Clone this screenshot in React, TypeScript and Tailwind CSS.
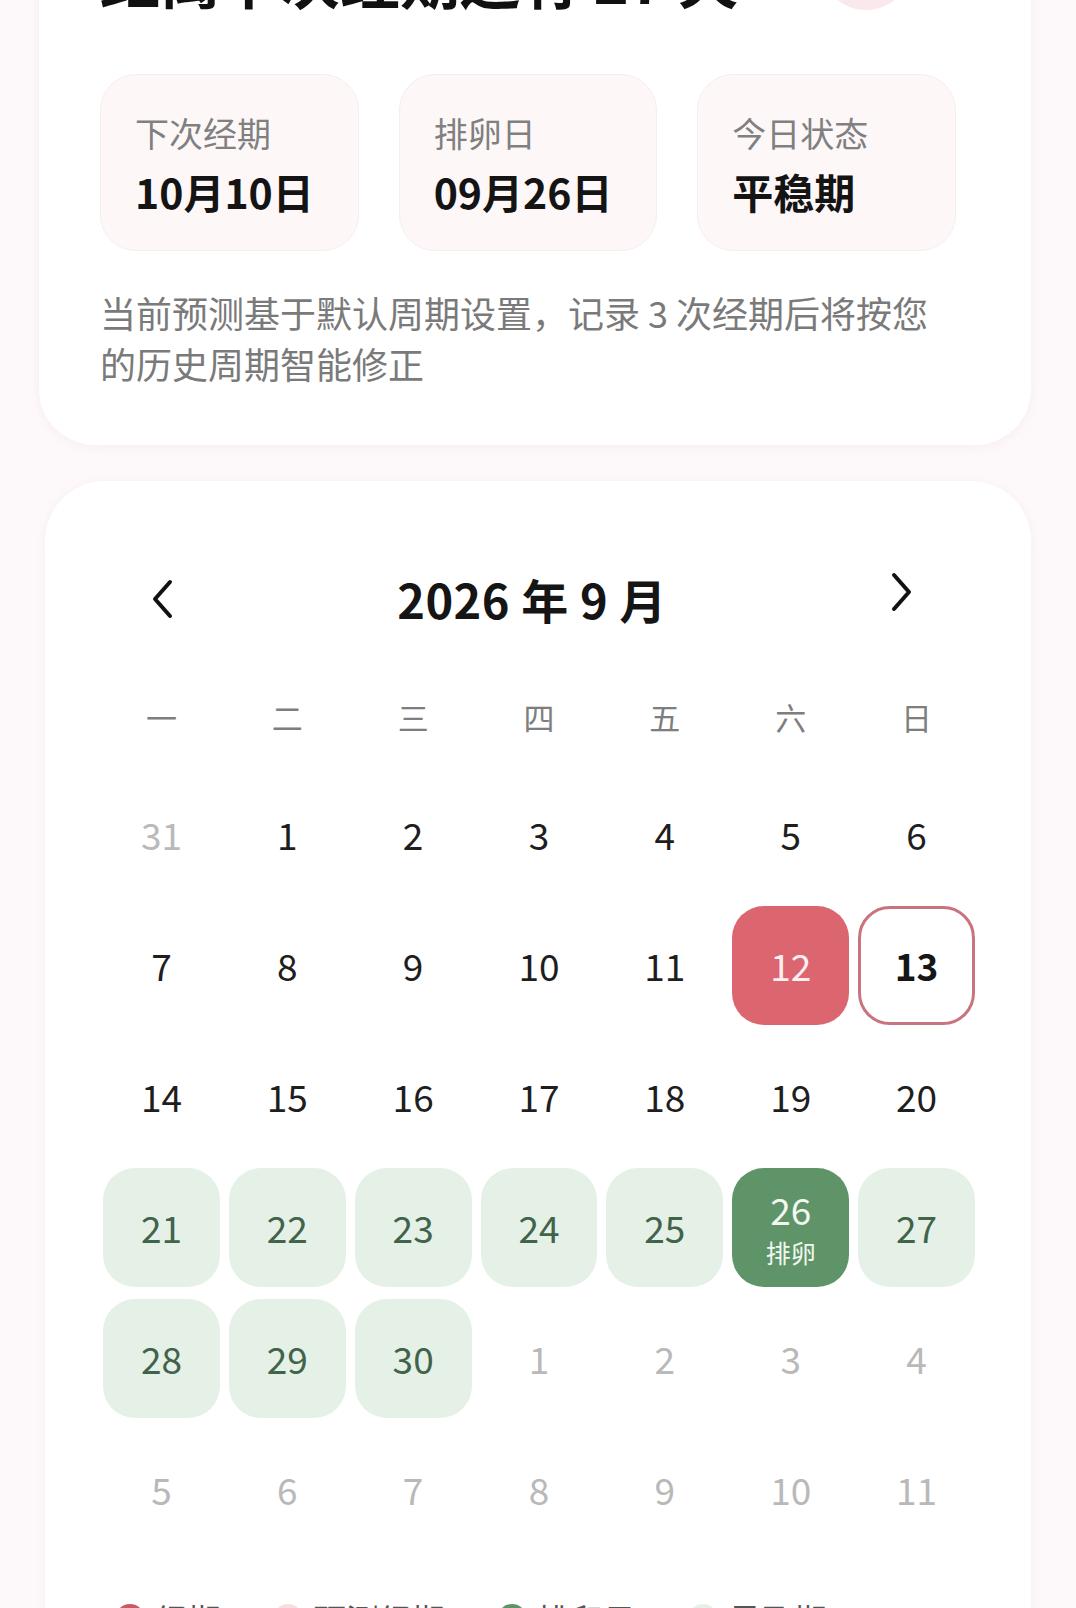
import React from "react";

type Kind = "out" | "normal" | "period" | "today" | "fertile" | "ovulation";

type Day = { n: number; kind: Kind };

const weekdays = ["一", "二", "三", "四", "五", "六", "日"];

const build = (): Day[] => {
  const days: Day[] = [{ n: 31, kind: "out" }];
  for (let i = 1; i <= 30; i++) {
    let kind: Kind = "normal";
    if (i === 12) kind = "period";
    if (i === 13) kind = "today";
    if (i >= 21 && i <= 30) kind = "fertile";
    if (i === 26) kind = "ovulation";
    days.push({ n: i, kind });
  }
  for (let i = 1; i <= 11; i++) days.push({ n: i, kind: "out" });
  return days;
};

const cellClass: Record<Kind, string> = {
  out: "text-[#b9b9b9]",
  normal: "text-[#1e1e1e]",
  period: "bg-[#dc6670] text-[#fdeef0] rounded-[32px]",
  today: "border-[3px] border-[#c9737e] bg-white text-[#161616] font-semibold rounded-[32px]",
  fertile: "bg-[#e5f1e7] text-[#41634b] rounded-[32px]",
  ovulation: "bg-[#5f9469] text-[#f1f7f1] rounded-[32px]",
};

function StatBox({ label, value }: { label: string; value: string }) {
  return (
    <div className="bg-[#fdf7f8] border border-[#f7edef] rounded-[36px] pt-[36px] pb-[32px] px-[34px]">
      <div className="text-[34px] leading-[44px] text-[#808080]">{label}</div>
      <div className="mt-[10px] text-[41px] leading-[53px] font-bold text-[#141414]">
        {value}
      </div>
    </div>
  );
}

function Legend({ color, label }: { color: string; label: string }) {
  return (
    <div className="flex items-center gap-[10px]">
      <span className={`w-[30px] h-[30px] rounded-full ${color}`} />
      <span className="text-[33px] leading-[44px] text-[#555]">{label}</span>
    </div>
  );
}

export default function App() {
  const days = build();

  return (
    <div
      className="min-h-screen bg-[#fdf8f9] px-[45px] pb-[40px] overflow-hidden"
      style={{ fontFamily: '"Noto Sans CJK SC", "Noto Sans", sans-serif' }}
    >
      {/* summary card */}
      <div className="bg-white rounded-b-[56px] -ml-[6px] pl-[61px] pr-[75px] pb-[56px] shadow-[0_2px_10px_rgba(240,220,225,0.35)]">
        <div className="-mt-[86px] h-[104px] flex items-end justify-between">
          <h1 className="text-[60px] leading-[60px] font-bold text-[#111] mb-[10px] whitespace-nowrap">
            距离下次经期还有 27 天
          </h1>
          <div className="w-[92px] h-[92px] rounded-full bg-[#fbe8ec] mb-[8px] mr-[44px] shrink-0" />
        </div>

        <div className="mt-[56px] grid grid-cols-3 gap-[40px]">
          <StatBox label="下次经期" value="10月10日" />
          <StatBox label="排卵日" value="09月26日" />
          <StatBox label="今日状态" value="平稳期" />
        </div>

        <p className="mt-[36px] max-w-[845px] text-[36px] leading-[51px] text-[#7a7a7a]">
          当前预测基于默认周期设置，记录 3 次经期后将按您的历史周期智能修正
        </p>
      </div>

      {/* calendar card */}
      <div className="mt-[36px] bg-white rounded-[60px] pl-[58px] pr-[56px] pt-[88px] pb-[60px] shadow-[0_2px_10px_rgba(240,220,225,0.35)]">
        <div className="h-[60px] flex items-center justify-between pl-[46px] pr-[60px]">
          <svg width="26" height="40" viewBox="0 0 26 40" fill="none">
            <path d="M21 3 L6 20 L21 37" stroke="#111" strokeWidth="4" strokeLinecap="round" strokeLinejoin="round" />
          </svg>
          <div className="text-[47px] leading-[60px] font-bold text-[#151515] tracking-[0.5px]">
            2026 年 9 月
          </div>
          <svg width="26" height="40" viewBox="0 0 26 40" fill="none" className="-mt-[14px]">
            <path d="M5 3 L20 20 L5 37" stroke="#111" strokeWidth="4" strokeLinecap="round" strokeLinejoin="round" />
          </svg>
        </div>

        <div className="mt-[66px] grid grid-cols-7 gap-x-[9px]">
          {weekdays.map((w) => (
            <div key={w} className="h-[44px] flex items-center justify-center text-[31px] text-[#7e7e7e]">
              {w}
            </div>
          ))}
        </div>

        <div className="mt-[36px] grid grid-cols-7 gap-x-[9px] gap-y-[12px]">
          {days.map((d, i) => (
            <div
              key={i}
              className={`h-[119px] flex flex-col items-center justify-center text-[37px] leading-none ${cellClass[d.kind]}`}
            >
              <span>{d.n}</span>
              {d.kind === "ovulation" && (
                <span className="mt-[12px] text-[25px] leading-none">排卵</span>
              )}
            </div>
          ))}
        </div>

        <div className="mt-[48px] flex items-center gap-[52px] pl-[12px]">
          <Legend color="bg-[#c95b66]" label="经期" />
          <Legend color="bg-[#f6dfe3]" label="预测经期" />
          <Legend color="bg-[#5f9469]" label="排卵日" />
          <Legend color="bg-[#e5f1e7]" label="易孕期" />
        </div>
      </div>
    </div>
  );
}
